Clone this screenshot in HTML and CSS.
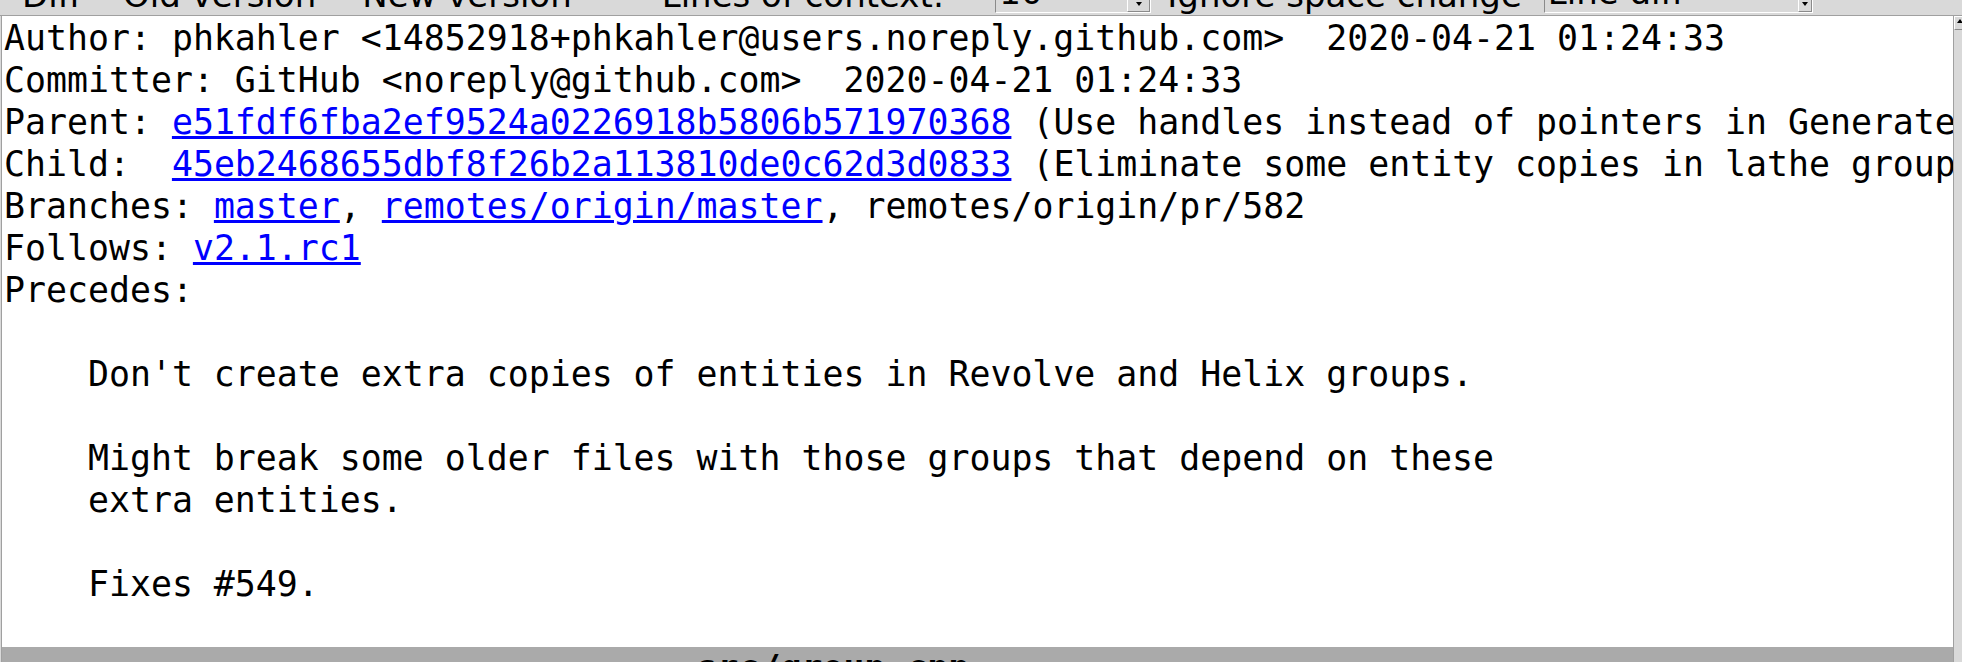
FILE: index.html
```html
<!DOCTYPE html>
<html lang="en">
<head>
    <meta charset="UTF-8">
    <meta name="viewport" content="width=device-width, initial-scale=1.0">
    <title>gitk - commit details</title>
    <link rel="stylesheet" href="styles.css">
</head>
<body>
    <div id="diff-options" class="diff-options">
        <span class="opt opt-diff">Diff</span>
        <span class="opt opt-old">Old version</span>
        <span class="opt opt-new">New version</span>
        <span class="opt opt-context">Lines of context:</span>
        <span class="box spinbox"><span class="field">10</span><span class="arrow"><span class="tri"></span></span></span>
        <span class="opt opt-space">Ignore space change</span>
        <span class="box combo"><span class="field">Line diff</span><span class="arrow"><span class="tri"></span></span></span>
    </div>

    <div id="details" class="details">
        <div id="ctext" class="ctext">
            <div class="line">Author: phkahler &lt;14852918+phkahler@users.noreply.github.com&gt;  2020-04-21 01:24:33</div>
            <div class="line">Committer: GitHub &lt;noreply@github.com&gt;  2020-04-21 01:24:33</div>
            <div class="line">Parent: <a class="link" href="#">e51fdf6fba2ef9524a0226918b5806b571970368</a> (Use handles instead of pointers in GenerateAll.)</div>
            <div class="line">Child:  <a class="link" href="#">45eb2468655dbf8f26b2a113810de0c62d3d0833</a> (Eliminate some entity copies in lathe groups.)</div>
            <div class="line">Branches: <a class="link" href="#">master</a>, <a class="link" href="#">remotes/origin/master</a>, remotes/origin/pr/582</div>
            <div class="line">Follows: <a class="link" href="#">v2.1.rc1</a></div>
            <div class="line">Precedes:</div>
            <div class="line"> </div>
            <div class="line">    Don't create extra copies of entities in Revolve and Helix groups.</div>
            <div class="line"> </div>
            <div class="line">    Might break some older files with those groups that depend on these</div>
            <div class="line">    extra entities.</div>
            <div class="line"> </div>
            <div class="line">    Fixes #549.</div>
            <div class="line"> </div>
            <div class="line filesep">-------------------------------- src/group.cpp --------------------------------</div>
        </div>
        <div class="vscroll">
            <div class="scroll-up"><span class="tri-up"></span></div>
        </div>
    </div>
</body>
</html>
```

FILE: styles.css
```css
body {
    margin: 0;
    height: 662px;
    overflow: hidden;
    background-color: #d9d9d9;
    font-family: "DejaVu Sans", "Liberation Sans", sans-serif;
    color: #000000;
}
.diff-options {
    height: 15px;
    border-bottom: 1px solid #a0a0a0;
    display: flex;
    align-items: flex-end;
    overflow: hidden;
    white-space: nowrap;
    font-size: 34px;
    line-height: 40px;
}
.opt {
    display: block;
}
.opt-diff {
    margin-left: 22px;
}
.opt-old {
    margin-left: 42px;
}
.opt-new {
    margin-left: 46px;
}
.opt-context {
    margin-left: 90px;
}
.opt-space {
    margin-left: 16px;
}
.box {
    display: flex;
    box-sizing: border-box;
    height: 42px;
    margin-bottom: 2px;
    border: 1px solid;
    border-color: #8a8a8a #ffffff #ffffff #8a8a8a;
    background-color: #d9d9d9;
}
.spinbox {
    width: 156px;
    margin-left: 51px;
}
.combo {
    width: 269px;
    margin-left: 22px;
}
.field {
    flex: 1;
    padding-left: 3px;
    line-height: 40px;
}
.arrow {
    width: 23px;
    box-sizing: border-box;
    border: 1px solid;
    border-color: #ffffff #8a8a8a #8a8a8a #ffffff;
    display: flex;
    align-items: flex-end;
    justify-content: center;
    padding-bottom: 5px;
}
.combo .arrow {
    width: 14px;
}
.tri {
    width: 0;
    height: 0;
    border-left: 3px solid transparent;
    border-right: 3px solid transparent;
    border-top: 4px solid #000000;
}
.details {
    display: flex;
    height: 646px;
}
.ctext {
    flex: none;
    width: 1952px;
    box-sizing: border-box;
    margin-left: 1px;
    border-left: 1px solid #a0a0a0;
    padding: 1px 0 0 2px;
    background-color: #ffffff;
    overflow: hidden;
    font-family: "DejaVu Sans Mono", "Liberation Mono", monospace;
    font-size: 34.86px;
    line-height: 42px;
}
.line {
    height: 42px;
    white-space: pre;
}
.link {
    color: #0000ff;
    text-decoration: underline;
    text-decoration-thickness: 3px;
    text-underline-offset: 2px;
}
.filesep {
    margin-left: -2px;
    padding-left: 2px;
    background-color: #aaaaaa;
    font-weight: bold;
}
.vscroll {
    flex: none;
    width: 30px;
    border-left: 1px solid #a0a0a0;
    background-color: #d9d9d9;
}
.scroll-up {
    height: 14px;
    box-sizing: border-box;
    border: 1px solid;
    border-color: #ffffff #8a8a8a #8a8a8a #ffffff;
    padding: 2px 0 0 2px;
}
.tri-up {
    display: block;
    width: 0;
    height: 0;
    border-left: 3px solid transparent;
    border-right: 3px solid transparent;
    border-bottom: 4px solid #000000;
}
```
